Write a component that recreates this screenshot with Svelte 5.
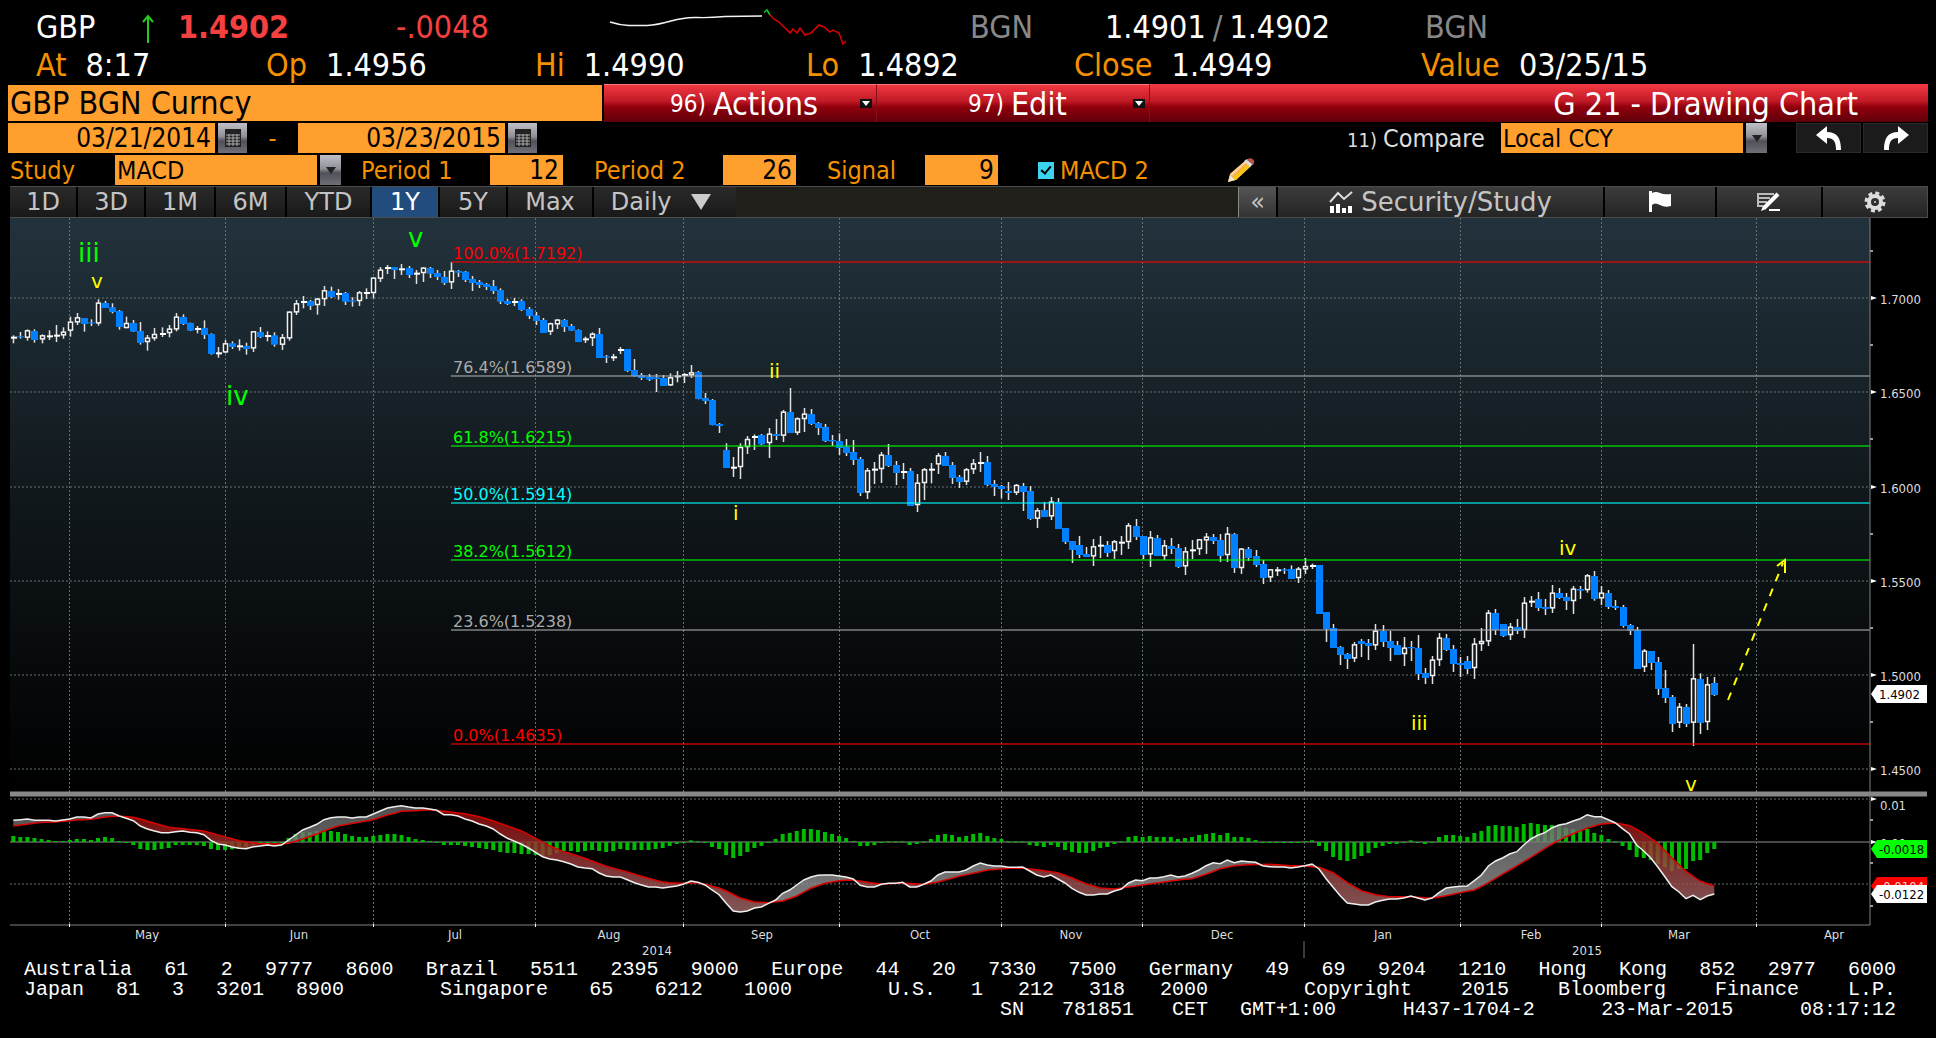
<script>
  let ticker = 'GBP BGN Curncy';
  let from = '03/21/2014';
  let to = '03/23/2015';
  let study = 'MACD';
  let currency = 'Local CCY';
  let period1 = '12';
  let period2 = '26';
  let signalPeriod = '9';
  let macd2 = true;
  let range = '1Y';

  const ranges = [
    { name: '1D', size: 66 },
    { name: '3D', size: 66 },
    { name: '1M', size: 68 },
    { name: '6M', size: 69 },
    { name: 'YTD', size: 83 },
    { name: '1Y', size: 66 },
    { name: '5Y', size: 66 },
    { name: 'Max', size: 84 }
  ];

  const months = [
    ['May', 147], ['Jun', 299], ['Jul', 455], ['Aug', 609], ['Sep', 762], ['Oct', 920],
    ['Nov', 1071], ['Dec', 1222], ['Jan', 1383], ['Feb', 1531], ['Mar', 1679], ['Apr', 1834]
  ];
  const monthLines = [69, 225, 373, 535, 683, 839, 1001, 1142, 1304, 1460, 1601, 1756];

  const priceTicks = [
    ['1.7000', 298], ['1.6500', 392], ['1.6000', 487], ['1.5500', 581], ['1.5000', 675], ['1.4500', 769]
  ];
  const minorTicks = [251, 345, 439, 534, 628, 722, 820, 863, 906];

  const levels = [
    { text: '100.0%(1.7192)', y: 262, color: '#ff0000' },
    { text: '76.4%(1.6589)', y: 376, color: '#aaaaaa' },
    { text: '61.8%(1.6215)', y: 446, color: '#00ff00' },
    { text: '50.0%(1.5914)', y: 503, color: '#00ffff' },
    { text: '38.2%(1.5612)', y: 560, color: '#00ff00' },
    { text: '23.6%(1.5238)', y: 630, color: '#aaaaaa' },
    { text: '0.0%(1.4635)', y: 744, color: '#ff0000' }
  ];

  const waves = [
    { text: 'iii', x: 78, y: 262, big: true },
    { text: 'iv', x: 226, y: 405, big: true },
    { text: 'v', x: 408, y: 247, big: true },
    { text: 'v', x: 91, y: 288 },
    { text: 'i', x: 733, y: 520 },
    { text: 'ii', x: 769, y: 378 },
    { text: 'iii', x: 1411, y: 730 },
    { text: 'iv', x: 1559, y: 555 },
    { text: 'v', x: 1685, y: 791 }
  ];

  // Daily candles: high, open, close, low, in thirds of a unit below "top"
  const segments = [
    { top: 220, bars: [
      [346,352,350,370],[336,349,352,356],[328,353,331,362],[328,333,360,368],[343,358,346,370],[331,348,346,360],
      [315,346,344,366],[322,346,335,356],[290,332,305,350],[279,307,292,315],[294,294,312,335],[298,307,310,318],
      [238,310,248,317],[243,249,264,264],[250,262,276,280],[270,273,321,329],[290,324,309,325],[300,309,335,336],
      [306,333,369,374],[345,366,353,392],[324,355,342,362],[322,341,339,351],[315,339,326,352],[279,328,290,334],
      [283,291,312,315],[308,309,332,333],[318,331,324,340],[301,324,345,357],[340,342,402,404],[381,399,397,413],
      [360,397,370,400],[364,370,381,387],[358,378,376,392],[368,378,387,404],[334,385,334,396],[321,336,351,354],
      [334,347,345,364],[337,346,374,380],[342,374,352,390],[274,355,275,362],[240,277,250,285],[228,250,243,265],
      [240,243,258,270],[234,255,236,284],[198,237,211,258],[200,213,231,234],[207,226,219,239],[216,219,245,255],
      [232,241,245,260],[213,243,217,258],[205,219,216,237],[172,219,173,235],[141,176,149,186],[135,149,141,162],
      [141,141,150,177],[132,148,145,165],[138,144,165,174],[150,160,158,192],[142,159,143,186],[141,144,161,174],
      [150,159,171,180],[153,171,189,195],[126,187,152,207],[150,153,158,171],[153,155,180,186],[168,177,189,213],
      [180,186,195,204],[189,192,201,210],[180,198,213,222],[205,210,245,252],[237,243,252,255],[234,249,243,258],
      [238,243,270,273],[261,267,288,297],[276,286,303,315],[294,300,339,339],[308,335,310,345],[297,313,299,327],
      [297,300,321,336],[312,318,332,333],[328,330,366,366],[350,358,355,369],[337,354,341,378],[324,342,414,414],
      [405,409,413,429],[402,412,409,423],[381,389,387,402],[387,387,453,456],[417,450,468,470],[459,465,474,480],
      [462,470,479,483],[462,472,477,516],[465,474,498,498],[460,496,472,498],[453,473,466,487],[459,468,462,489],
      [435,466,457,474],[453,456,537,538],[519,534,543,552],[537,540,615,616],[609,612,618,639],[670,690,744,744],
      [711,742,740,771],[670,741,681,777],[648,681,657,702],[643,655,648,690],[642,645,673,675],[624,669,641,714],
      [597,642,648,660],[570,647,575,666],[504,576,639,639],[592,638,595,645],[564,597,581,636],[567,582,612,615],
      [606,609,624,645],[612,621,663,666],[645,660,664,678],[640,663,684,705]
    ] },
    { top: 340, bars: [
      [297,320,339,348],[300,336,360,375],[351,357,459,468],[384,457,391,477],[366,392,386,432],[336,387,344,429],
      [312,345,378,381],[363,375,399,435],[369,400,393,417],[384,393,498,498],[402,495,428,516],[384,429,388,480],
      [369,389,386,430],[339,373,346,402],[336,348,378,378],[366,375,414,432],[405,411,426,444],[384,425,388,435],
      [357,388,370,402],[336,373,366,396],[348,366,435,438],[420,432,441,468],[435,438,447,475],[426,453,459,480],
      [432,458,435,465],[429,438,456,513],[438,453,537,540],[504,536,511,564],[486,510,531,531],[471,529,485,540],
      [474,486,567,567],[564,564,606,612],[603,603,630,669],[588,615,645,654],[621,642,651,651],[597,649,619,678],
      [588,621,614,654],[603,615,639,651],[600,633,604,657],[588,607,605,645],[549,606,556,627],[537,558,591,600],
      [588,588,645,657],[573,643,592,681],[585,594,648,648],[600,648,616,660],[594,618,627,642],[612,624,681,684],
      [621,679,634,705],[600,636,628,657]
    ] },
    { top: 500, bars: [
      [118,147,118,165],[99,121,110,162],[102,111,123,132],[102,120,168,186],[81,165,101,186],[99,102,204,219],
      [144,204,146,222],[141,147,174,183],[150,168,195,201],[180,192,234,252],[207,232,208,246],[201,211,208,228],
      [204,208,212,222],[196,207,237,237],[201,234,206,249],[174,208,198,222],[191,198,195,207],[195,195,342,342],
      [336,336,387,426],[372,384,444,444],[438,441,465,495],[459,462,477,507],[426,475,433,486],[417,423,432,471],
      [417,429,438,480],[372,436,392,450],[375,393,426,441],[393,423,444,483],[423,435,465,465],[411,462,443,498],
      [423,441,445,483],[405,444,522,540],[504,519,534,552],[468,528,479,552],[399,480,413,498],[402,414,450,453],
      [435,447,492,516],[471,489,495,531],[468,483,507,522],[414,504,431,537],[384,432,423,453],[330,424,338,438],
      [327,339,390,405],[372,372,408,411],[369,405,380,420],[357,381,393,402],[291,390,308,414],[288,309,302,321],
      [276,297,324,333],[297,321,327,345],[255,325,278,339],[264,279,294,297],[279,291,303,330],[258,303,266,342]
    ] },
    { top: 520, bars: [
      [198,207,212,237],[162,210,166,218],[153,168,237,242],[198,235,218,255],[210,219,261,267],[240,258,264,270],
      [255,261,318,323],[312,315,332,345],[321,330,447,447],[387,441,392,456],[393,393,429,450],[411,426,507,525],
      [450,504,534,549],[525,531,612,636],[549,608,560,624],[552,561,612,621],[372,608,475,678],[460,477,609,642],
      [471,606,493,630],[471,489,525,528]
    ] }
  ];

  const xOf = (n) => 13.3 + n * 7.058;

  const candles = segments
    .flatMap((s) => s.bars.map((bar) => bar.map((v) => s.top + v / 3)))
    .map(([high, open, close, low], n) => ({
      x: Math.round(xOf(n)),
      high,
      low,
      down: close > open,
      top: Math.min(open, close),
      size: Math.max(Math.abs(close - open), 1)
    }));

  // MACD pane, thirds of a unit; zero line at 842
  const histogram = [
    18,15,15,12,9,6,3,3,6,9,9,6,12,15,12,3,-2,-9,-21,-24,-24,-21,-18,-9,-9,-9,-9,-12,-21,-24,-24,-22,-21,-18,-9,-4,-2,-2,-1,
    12,24,30,30,33,34,33,30,24,18,15,15,18,21,24,24,21,15,9,6,3,-2,-9,-9,-9,-12,-15,-18,-21,-24,-30,-33,-33,-36,-36,-39,
    -42,-39,-33,-27,-27,-30,-27,-24,-27,-30,-27,-21,-24,-24,-24,-24,-21,-18,-12,-6,-2,5,2,-2,-15,-21,-39,-48,-42,-30,-18,
    -12,-3,9,24,27,33,39,39,36,30,24,18,12,3,-12,-12,-9,-3,2,2,2,-9,-6,2,9,21,24,21,15,18,24,27,18,12,9,2,2,2,-9,-12,-15,
    -9,-15,-24,-30,-33,-33,-27,-18,-15,-6,2,15,18,15,18,15,15,15,9,12,15,21,24,27,21,27,15,15,12,6,-3,-3,-3,-3,-3,-3,2,5,
    -12,-27,-45,-54,-57,-51,-42,-33,-18,-12,-6,-6,-3,5,-3,-6,-3,15,21,21,18,15,27,33,48,51,48,48,45,54,57,54,51,51,51,42,
    39,36,39,27,21,9,2,-12,-24,-45,-48,-54,-66,-75,-87,-81,-81,-57,-54,-33,-21
  ];
  const macd = [
    121,119,117,121,121,121,123,120,117,111,111,114,102,98,98,108,115,122,138,147,153,158,158,155,153,157,158,164,181,192,
    195,201,205,206,200,198,195,198,195,180,165,150,142,133,119,113,111,111,114,111,111,102,93,84,80,77,81,84,84,87,91,104,
    104,108,117,123,132,138,147,162,175,184,193,204,217,230,237,240,245,252,261,264,266,279,288,291,291,299,308,315,321,
    321,324,321,318,312,303,307,315,330,344,370,393,396,393,384,381,370,360,340,330,315,300,291,286,285,285,288,291,297,
    316,321,321,313,310,310,307,321,321,313,303,285,276,276,276,270,258,249,255,258,258,262,262,261,273,285,291,285,297,
    309,325,337,345,345,342,342,333,327,309,300,302,294,294,290,285,291,288,280,270,257,248,251,240,248,243,245,247,257,
    260,261,261,264,261,257,252,267,296,322,347,369,372,375,375,366,361,357,357,354,348,354,360,354,338,324,321,319,318,
    302,285,258,243,234,222,215,195,177,166,158,144,135,131,123,116,104,110,110,119,129,146,162,195,213,234,261,290,320,
    336,356,346,359,348,342
  ];
  const signalKnots = [
    [0,138],[4,127],[6,126],[9,120],[11,118],[13,111],[15,108],[17,112],[18,117],[20,130],[22,142],[24,146],[27,153],
    [29,165],[32,182],[35,191],[38,192],[39,190],[41,177],[43,162],[44,153],[46,138],[49,127],[51,119],[53,105],[55,94],
    [57,92],[59,89],[61,94],[64,101],[66,110],[68,123],[70,138],[72,153],[74,175],[76,198],[78,215],[80,228],[82,243],
    [84,259],[87,276],[90,295],[92,306],[94,310],[97,309],[98,313],[100,324],[101,333],[103,354],[105,366],[107,368],
    [109,363],[111,348],[113,325],[115,310],[117,302],[119,300],[121,307],[123,312],[126,309],[129,313],[131,306],
    [134,289],[136,280],[138,270],[141,265],[143,264],[146,272],[148,278],[150,294],[152,312],[154,324],[156,327],
    [158,321],[161,312],[165,300],[167,296],[169,283],[171,266],[173,257],[175,254],[178,253],[181,257],[183,258],
    [185,262],[187,278],[189,308],[191,332],[193,344],[195,350],[198,350],[201,355],[203,347],[205,338],[207,330],
    [209,308],[212,270],[215,232],[218,192],[220,170],[223,144],[225,132],[227,129],[229,137],[231,160],[233,190],
    [235,234],[237,274],[239,304],[240,311],[241,317]
  ];

  const paneY = (v) => 780 + v / 3;

  function signalAt(n) {
    const i = Math.max(1, signalKnots.findIndex(([k]) => k >= n));
    const [n0, v0] = signalKnots[i - 1];
    const [n1, v1] = signalKnots[i];
    return v0 + ((v1 - v0) * (n - n0)) / (n1 - n0);
  }

  const signal = macd.map((_, n) => signalAt(n));
  const toPoints = (list) => list.map((v, n) => `${xOf(n).toFixed(1)},${paneY(v).toFixed(1)}`).join(' ');

  // One filled slice for every pair of neighbouring days
  function ribbon(above) {
    let d = '';
    for (let n = 1; n < macd.length; n++) {
      const gap = macd[n - 1] + macd[n] - signal[n - 1] - signal[n];
      if (gap < 0 !== above) continue;
      const a = xOf(n - 1).toFixed(1);
      const b = xOf(n).toFixed(1);
      d += `M${a} ${paneY(macd[n - 1])}L${b} ${paneY(macd[n])}L${b} ${paneY(signal[n])}L${a} ${paneY(signal[n - 1])}Z`;
    }
    return d;
  }
</script>

<div class="terminal">
  <header class="quote">
    <div class="row first">
      <span>GBP</span>
      <svg class="up" width="12" height="30" viewBox="0 0 12 30">
        <path d="M6 29V2M1 8L6 2L11 8" fill="none" stroke="#22cc22" stroke-width="2" />
      </svg>
      <strong class="red">1.4902</strong>
      <span class="red">-.0048</span>
      <svg class="spark" width="240" height="46" viewBox="608 2 240 46" fill="none" stroke-width="1.5">
        <path d="M609 22Q618 25 628 25.5H646Q656 25 670 21T696 17.500T724 16.500L761 16" stroke="#f4f4f4" />
        <path d="M763 12.500L766 10L769 15" stroke="#00cc22" />
        <path d="M769 15L773 19L778 22L783 27L789 33L792 29L796 33L799 28L804 35L810 33L818 25L823 27L829 32L832 30L838 33L842 44L845 41" stroke="#dd0000" />
      </svg>
      <span class="grey">BGN</span>
      <span>1.4901<i>/</i>1.4902</span>
      <span class="grey">BGN</span>
    </div>
    <div class="row second">
      <span><b>At</b> 8:17</span>
      <span><b>Op</b> 1.4956</span>
      <span><b>Hi</b> 1.4990</span>
      <span><b>Lo</b> 1.4892</span>
      <span><b>Close</b> 1.4949</span>
      <span><b>Value</b> 03/25/15</span>
    </div>
  </header>

  <div class="titlebar">
    <input class="ticker" aria-label="Security" bind:value={ticker} />
    <div class="redbar">
      <button class="menu"><small>96)</small><span>Actions</span><i class="drop"></i></button>
      <button class="menu"><small>97)</small><span>Edit</span><i class="drop"></i></button>
      <h1>G 21 - Drawing Chart</h1>
    </div>
  </div>

  <div class="line">
    <input class="date" aria-label="From" bind:value={from} />
    <button class="calendar" aria-label="Pick start date">
      <svg width="16" height="18" viewBox="0 0 16 18">
        <path d="M0 0H16V18H0Z" fill="#222" />
        <path d="M1 6H15M1 9H15M1 12H15M1 15H15M4 5V17M8 5V17M12 5V17" stroke="#aaa" />
      </svg>
    </button>
    <span class="dash">-</span>
    <input class="date" aria-label="To" bind:value={to} />
    <button class="calendar" aria-label="Pick end date">
      <svg width="16" height="18" viewBox="0 0 16 18">
        <path d="M0 0H16V18H0Z" fill="#222" />
        <path d="M1 6H15M1 9H15M1 12H15M1 15H15M4 5V17M8 5V17M12 5V17" stroke="#aaa" />
      </svg>
    </button>
    <label class="compare" for="currency"><small>11)</small>Compare</label>
    <div class="pick wide">
      <select id="currency" bind:value={currency}>
        <option>Local CCY</option>
        <option>USD</option>
      </select>
      <i class="arrow"></i>
    </div>
    <button class="history" aria-label="Undo">
      <svg width="28" height="26" viewBox="0 0 28 26">
        <path d="M1 10L12 1V7C22 7 26 13 26 25H21C21 17 19 13 12 13V19Z" fill="#fff" />
      </svg>
    </button>
    <button class="history" aria-label="Redo">
      <svg width="28" height="26" viewBox="0 0 28 26">
        <path d="M27 10L16 1V7C6 7 2 13 2 25H7C7 17 9 13 16 13V19Z" fill="#fff" />
      </svg>
    </button>
  </div>

  <div class="line amber">
    <label class="study" for="study">Study</label>
    <div class="pick">
      <select id="study" bind:value={study}>
        <option>MACD</option>
        <option>RSI</option>
      </select>
      <i class="arrow"></i>
    </div>
    <label class="period first-period" for="period1">Period 1</label>
    <input id="period1" class="number" bind:value={period1} />
    <label class="period" for="period2">Period 2</label>
    <input id="period2" class="number" bind:value={period2} />
    <label class="period short" for="signal">Signal</label>
    <input id="signal" class="number" bind:value={signalPeriod} />
    <label class="check"><input type="checkbox" bind:checked={macd2} />MACD 2</label>
    <button class="pencil" aria-label="Draw">
      <svg width="28" height="26" viewBox="0 0 28 26">
        <path d="M1 25L3 17L18 4L24 9L9 23Z" fill="#f5b041" />
        <path d="M5 21L21 7L24 9L9 23Z" fill="#f5c518" />
        <path d="M3 17L18 4L20 5L5 19Z" fill="#ffcf9a" />
        <path d="M1 25L3 18L8 23Z" fill="#efe6d0" />
        <path d="M17 4L20 2L26 7L23 10Z" fill="#ddd" />
        <path d="M20 3C23 -1 30 3 26 8Z" fill="#b85450" />
      </svg>
    </button>
  </div>

  <nav class="toolbar">
    {#each ranges as r}
      <button class:active={range === r.name} style="width: {r.size}px" on:click={() => (range = r.name)}>{r.name}</button>
    {/each}
    <button class="daily">Daily
      <svg width="20" height="16" viewBox="0 0 20 16"><path d="M0 0H20L10 16Z" fill="#ccc" /></svg>
    </button>
    <span class="blank"></span>
    <button class="collapse" aria-label="Collapse">«</button>
    <button class="tool security">
      <svg width="24" height="22" viewBox="0 0 24 22">
        <path d="M1 11L9 2L15 8L23 1" fill="none" stroke="#ddd" stroke-width="2" />
        <path d="M1 15H5V22H1ZM7 13H11V22H7ZM13 17H17V22H13ZM19 15H23V22H19Z" fill="#fff" />
      </svg>
      Security/Study
    </button>
    <button class="tool flag" aria-label="Events">
      <svg width="22" height="22" viewBox="0 0 22 22">
        <path d="M0 0H3V2Q7 0 11 2T22 3V15Q16 17 11 14T3 14V21H0Z" fill="#fff" />
      </svg>
    </button>
    <button class="tool note" aria-label="Annotate">
      <svg width="24" height="20" viewBox="0 0 24 20">
        <path d="M1 2H17M1 6H13M1 10H10M1 14H6M1 1V15" stroke="#bbb" stroke-width="2" />
        <path d="M21 2L7 16" stroke="#fff" stroke-width="4" />
        <path d="M4 19L6 14L9 17ZM12 17H23V19H12Z" fill="#fff" />
      </svg>
    </button>
    <button class="tool gear" aria-label="Settings">
      <svg width="22" height="22" viewBox="0 0 22 22">
        <circle cx="11" cy="11" r="9" fill="none" stroke="#ddd" stroke-width="3" stroke-dasharray="4 3.070" />
        <circle cx="11" cy="11" r="6" fill="none" stroke="#ddd" stroke-width="4" />
        <circle cx="11" cy="11" r="1" fill="#ddd" />
      </svg>
    </button>
  </nav>

  <svg class="chart" viewBox="0 218 1936 742">
    <defs>
      <linearGradient id="plot" x1="0" y1="0" x2="0" y2="1">
        <stop offset="0" stop-color="#22323c" />
        <stop offset="0.5" stop-color="#10171b" />
        <stop offset="1" stop-color="#000000" />
      </linearGradient>
      <linearGradient id="below" gradientUnits="userSpaceOnUse" x1="0" y1="800" x2="0" y2="910">
        <stop offset="0" stop-color="#960000" />
        <stop offset="1" stop-color="#a06a6a" />
      </linearGradient>
      <linearGradient id="above" gradientUnits="userSpaceOnUse" x1="0" y1="800" x2="0" y2="910">
        <stop offset="0" stop-color="#606060" />
        <stop offset="1" stop-color="#a0a0a0" />
      </linearGradient>
    </defs>

    <rect x="10" y="218" width="1860" height="573" fill="url(#plot)" />

    <g class="grid">
      {#each monthLines as x}
        <path d="M{x + 0.5} 218V925" />
      {/each}
      {#each priceTicks as [, y]}
        <path d="M10 {y}H1870" />
      {/each}
      <path d="M10 799H1870M10 884H1870" />
    </g>

    {#each candles as c}
      <path class="wick" d="M{c.x + 0.5} {c.high}V{c.low}" />
      {#if c.down}
        <rect x={c.x - 3} y={c.top} width="7" height={c.size} fill="#0080ff" />
      {:else if c.size < 3}
        <rect x={c.x - 2} y={c.top} width="6" height="2" fill="#ffffff" />
      {:else}
        <rect class="hollow" x={c.x - 1.5} y={c.top + 0.5} width="4" height={c.size - 1} />
      {/if}
    {/each}

    {#each levels as level}
      <path d="M451 {level.y}H1870" stroke={level.color} stroke-width="2" opacity="0.55" />
      <text class="level" x="453" y={level.y - 3} fill={level.color}>{level.text}</text>
    {/each}

    {#each waves as w}
      <text class="wave" class:big={w.big} x={w.x} y={w.y}>{w.text}</text>
    {/each}

    <path d="M1728 700L1783 563" class="arrow-line" stroke-dasharray="8 8" />
    <path d="M1777 566L1785 560V573" class="arrow-line" />

    <path d="M10 842H1870" stroke="#606060" stroke-width="1.500" />
    {#each histogram as h, n}
      <rect x={xOf(n) - 2} y={h > 0 ? 842 - h / 3 : 842} width="4" height={Math.max(Math.abs(h) / 3, 1)} fill="#00bb00" />
    {/each}
    <path d={ribbon(true)} fill="url(#above)" opacity="0.800" />
    <path d={ribbon(false)} fill="url(#below)" opacity="0.800" />
    <polyline points={toPoints(signal)} fill="none" stroke="#dd0000" stroke-width="1.500" />
    <polyline points={toPoints(macd)} fill="none" stroke="#eeeeee" stroke-width="1.500" />

    <path d="M10 794H1927" stroke="#888888" stroke-width="5" />
    <path d="M1870 218V925M10 925H1870" fill="none" stroke="#808080" stroke-width="1" />
    {#each monthLines as x}
      <path d="M{x + 0.5} 924V927" stroke="#ffffff" />
    {/each}
    <path d="M1304 941V958" stroke="#777777" />

    {#each minorTicks as y}
      <path d="M1870 {y}H1873" stroke="#999999" stroke-width="2" />
    {/each}
    {#each priceTicks as [text, y]}
      <path d="M1871 {y - 2}L1877 {y}L1871 {y + 2}Z" fill="#ffffff" />
      <text class="axis" x="1880" y={y + 6}>{text}</text>
    {/each}
    <path d="M1871 797L1877 799L1871 801ZM1871 840L1877 842L1871 844Z" fill="#ffffff" />
    <text class="axis" x="1880" y="810">0.01</text>
    <text class="axis" x="1880" y="848">0.00</text>

    <path d="M1871 694L1877 685H1927V703H1877Z" fill="#ffffff" />
    <text class="axis dark" x="1879" y="699">1.4902</text>
    <path d="M1871 849L1877 840H1927V858H1877Z" fill="#00ff00" />
    <text class="axis dark" x="1879" y="854">-0.0018</text>
    <path d="M1871 886L1877 877H1927V895H1877Z" fill="#ff0000" />
    <text class="axis" x="1879" y="891">-0.0104</text>
    <path d="M1871 894L1877 885H1927V903H1877Z" fill="#ffffff" />
    <text class="axis dark" x="1879" y="899">-0.0122</text>

    {#each months as [name, x]}
      <text class="axis middle" {x} y="939">{name}</text>
    {/each}
    <text class="axis middle" x="657" y="955">2014</text>
    <text class="axis middle" x="1587" y="955">2015</text>
  </svg>

  <footer>
    <p>Australia 61 2 9777 8600 Brazil 5511 2395 9000 Europe 44 20 7330 7500 Germany 49 69 9204 1210 Hong Kong 852 2977 6000</p>
    <div class="offices">
      <p>Japan 81 3 3201 8900</p>
      <p>Singapore 65 6212 1000</p>
      <p>U.S. 1 212 318 2000</p>
      <p>Copyright 2015 Bloomberg Finance L.P.</p>
    </div>
    <div class="session">
      <p>SN 781851 CET</p>
      <p>GMT+1:00 H437-1704-2 23-Mar-2015 08:17:12</p>
    </div>
  </footer>
</div>

<style>
  :global(body) {
    margin: 0;
    background: #000;
  }

  .terminal {
    background: #000;
    color: #fff;
    font-family: "DejaVu Sans Condensed", "DejaVu Sans", sans-serif;
    font-size: 25px;
    overflow: hidden;
  }

  button, input, select {
    font: inherit;
    color: inherit;
    border: 0;
    padding: 0;
    margin: 0;
    border-radius: 0;
    box-sizing: border-box;
  }

  .quote {
    height: 84px;
    padding-top: 8px;
    box-sizing: border-box;
    font-size: 32px;
    line-height: 38px;
  }

  .row {
    display: grid;
    padding-left: 36px;
    white-space: nowrap;
  }

  .first {
    grid-template-columns: 106fr 36fr 218fr 213fr 361fr 135fr 320fr 511fr;
  }

  .second {
    grid-template-columns: 230fr 269fr 271fr 268fr 347fr 515fr;
  }

  .row > * {
    min-width: 0;
  }

  .up {
    margin-top: 6px;
  }

  .spark {
    overflow: visible;
    margin-top: -6px;
    height: 46px;
    margin-bottom: -6px;
  }

  .red {
    color: #f54040;
  }

  .grey, .row i {
    color: #888;
    font-style: normal;
  }

  .row i {
    padding: 0 7px;
  }

  .row b {
    color: #f59100;
    font-weight: normal;
    padding-right: 10px;
  }

  .titlebar {
    display: flex;
    height: 38px;
    padding: 0 8px;
    gap: 2px;
    font-size: 32px;
  }

  .ticker {
    flex: 0 1 594px;
    min-width: 0;
    margin-top: 1px;
    height: 36px;
    padding-left: 2px;
    background: #ff9f2d;
    color: #000;
  }

  .redbar {
    flex: 1;
    display: flex;
    background: linear-gradient(#f43a44, #c01a26 45%, #90000c 60%, #60000a);
  }

  .menu {
    display: flex;
    align-items: center;
    width: 273px;
    padding: 0 4px 0 66px;
    background: none;
    border-right: 1px solid #85101a;
    border-top: 1px solid #f87880;
    line-height: 32px;
    white-space: nowrap;
  }

  .menu + .menu {
    padding-left: 91px;
  }

  .menu small {
    font-size: 24px;
    margin-right: 7px;
  }

  .drop {
    margin-left: auto;
    width: 12px;
    height: 9px;
    background: #111;
    position: relative;
  }

  .drop::after {
    content: "";
    position: absolute;
    left: 2px;
    top: 2px;
    border: 4px solid transparent;
    border-top: 5px solid #fff;
    border-bottom: 0;
  }

  h1 {
    margin: 0 70px 0 auto;
    font-size: 32px;
    font-weight: normal;
    line-height: 40px;
  }

  .line {
    display: flex;
    align-items: center;
    height: 30px;
    padding: 0 8px;
    margin-top: 1px;
    white-space: nowrap;
  }

  .amber {
    color: #f59100;
    margin-top: 2px;
  }

  .date, .number {
    width: 207px;
    height: 30px;
    padding-right: 4px;
    text-align: right;
    background: #ff9f2d;
    color: #000;
    font-size: 26px;
  }

  .number {
    width: 73px;
  }

  .calendar {
    width: 29px;
    height: 30px;
    margin-left: 3px;
    background: linear-gradient(#c0c0c8, #909098 45%, #50505a 60%, #707078);
    display: grid;
    place-items: center;
  }

  .dash {
    width: 51px;
    text-align: center;
    color: #f59100;
  }

  .compare {
    margin-left: auto;
    width: 154px;
    color: #ddd;
  }

  .compare small {
    font-size: 20px;
    margin-right: 6px;
  }

  .pick {
    display: flex;
    width: 226px;
    gap: 3px;
  }

  .wide {
    width: 266px;
  }

  select {
    appearance: none;
    flex: 1;
    min-width: 0;
    height: 30px;
    padding-left: 2px;
    background: #ff9f2d;
    color: #000;
  }

  .arrow {
    width: 21px;
    background: linear-gradient(#c0c0c8, #909098 45%, #50505a 60%, #707078);
    display: grid;
    place-items: center;
  }

  .arrow::after {
    content: "";
    border: 5px solid transparent;
    border-top: 7px solid #222;
    border-bottom: 0;
  }

  .history {
    width: 65px;
    height: 30px;
    margin-left: 2px;
    background: #1b1b1b;
    border: 1px solid #2a2a2a;
    display: grid;
    place-items: center;
  }

  .pick + .history {
    margin-left: 29px;
  }

  .study {
    width: 107px;
    padding-left: 2px;
    box-sizing: border-box;
  }

  .period {
    width: 129px;
    margin-left: 31px;
  }

  .first-period {
    margin-left: 20px;
  }

  .short {
    width: 98px;
  }

  .check {
    display: flex;
    align-items: center;
    margin-left: 40px;
    gap: 6px;
  }

  .check input {
    appearance: none;
    width: 16px;
    height: 17px;
    background: #3cd3ee;
    display: grid;
    place-items: center;
  }

  .check input:checked::after {
    content: "";
    width: 4px;
    height: 8px;
    margin-bottom: 3px;
    border: solid #000;
    border-width: 0 2px 2px 0;
    transform: rotate(40deg);
  }

  .pencil {
    margin-left: 78px;
    background: none;
    height: 26px;
    line-height: 0;
  }

  .toolbar {
    display: flex;
    height: 32px;
    margin: 1px 8px 0 10px;
    border: solid #4c4c4c;
    border-width: 1px 1px 1px 0;
    box-sizing: border-box;
    gap: 2px;
    background: #000;
    font-family: "DejaVu Sans", sans-serif;
    font-size: 24px;
    line-height: 30px;
    color: #c4c4c4;
  }

  .toolbar button {
    flex-shrink: 0;
    background: linear-gradient(#2a2a2a, #191919);
  }

  .toolbar .active {
    background: #224c7c;
    color: #fff;
  }

  .toolbar .daily {
    width: 142px;
    padding-right: 8px;
  }

  .daily svg {
    margin-left: 12px;
  }

  .blank {
    flex: 1;
    margin: 0 -2px;
    background: #211f1a;
  }

  .toolbar .collapse {
    width: 38px;
    background: linear-gradient(#555, #333);
    border-left: 1px solid #888;
  }

  .toolbar .tool {
    display: flex;
    align-items: center;
    justify-content: center;
    gap: 8px;
    width: 110px;
    background: linear-gradient(#3c3c3c, #242424);
  }

  .toolbar .security {
    width: 325px;
    font-size: 26px;
  }

  .toolbar .note, .toolbar .gear {
    width: 104px;
  }

  .chart {
    display: block;
    width: 100%;
    height: auto;
    font-family: "DejaVu Sans", sans-serif;
  }

  .grid path {
    stroke: #667070;
    stroke-dasharray: 2 2;
  }

  .wick {
    stroke: #e0e0e0;
    stroke-width: 1.5;
  }

  .hollow {
    fill: #10171b;
    stroke: #f0f0f0;
    stroke-width: 1.5;
  }

  .level {
    font-size: 16px;
  }

  .wave {
    font-size: 20px;
    fill: #ffff00;
  }

  .big {
    font-size: 26px;
    fill: #00ff00;
  }

  .arrow-line {
    fill: none;
    stroke: #ffff00;
    stroke-width: 2;
  }

  .axis {
    font-family: "DejaVu Sans Condensed", "DejaVu Sans", sans-serif;
    font-size: 13px;
    fill: #ddd;
  }

  .middle {
    text-anchor: middle;
  }

  .dark {
    fill: #000;
  }

  footer {
    padding: 0 40px 8px 24px;
    font-family: "Liberation Mono", monospace;
    font-size: 20px;
    line-height: 20px;
  }

  footer p {
    margin: 0;
    text-align: justify;
    text-align-last: justify;
    white-space: nowrap;
  }

  .offices {
    display: grid;
    grid-template-columns: 320fr 352fr 320fr 592fr;
    gap: 96px;
  }

  .session {
    display: grid;
    grid-template-columns: 208fr 656fr;
    gap: 32px;
    padding-left: 976px;
  }
</style>
